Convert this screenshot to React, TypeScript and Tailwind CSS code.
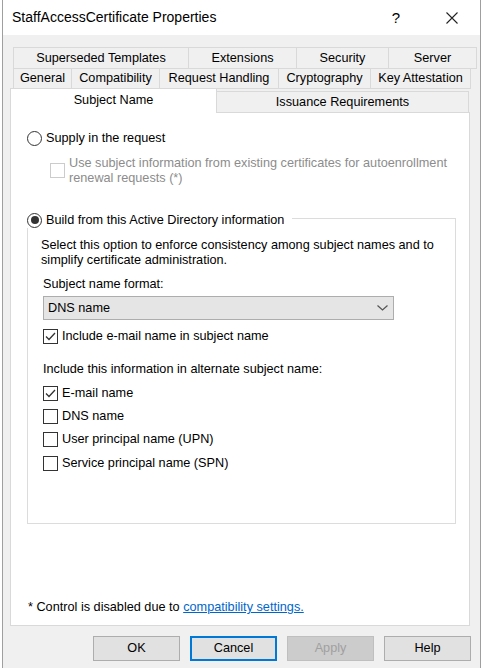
import React from 'react';

function Tab({ label, w }: { label: string; w: string }) {
  return (
    <div
      className={`-ml-px first:ml-0 flex items-center justify-center border border-[#d9d9d9] bg-[#f0f0f0] ${w}`}
    >
      {label}
    </div>
  );
}

function Radio({ checked }: { checked?: boolean }) {
  return (
    <div className="flex h-[15px] w-[15px] shrink-0 items-center justify-center rounded-full border border-[#333333] bg-white">
      {checked && <div className="h-[8px] w-[8px] rounded-full bg-[#333333]" />}
    </div>
  );
}

function Check({ checked, disabled }: { checked?: boolean; disabled?: boolean }) {
  return (
    <div
      className={`flex h-[15px] w-[15px] shrink-0 items-center justify-center border bg-white ${
        disabled ? 'border-[#cccccc]' : 'border-[#333333]'
      }`}
    >
      {checked && (
        <svg width="13" height="13" viewBox="0 0 13 13">
          <polyline points="2,6.5 5,9.5 11,3" fill="none" stroke="#333333" strokeWidth="1.3" />
        </svg>
      )}
    </div>
  );
}

function CheckRow({ label, checked }: { label: string; checked?: boolean }) {
  return (
    <div className="flex h-[23.3px] items-center gap-[4px]">
      <Check checked={checked} />
      <span>{label}</span>
    </div>
  );
}

function Button({ label, kind }: { label: string; kind?: 'default' | 'disabled' }) {
  const look =
    kind === 'default'
      ? 'border-2 border-[#0078d7] bg-[#e1e1e1] text-black'
      : kind === 'disabled'
        ? 'border border-[#bfbfbf] bg-[#cccccc] text-[#a0a0a0]'
        : 'border border-[#adadad] bg-[#e1e1e1] text-black';
  return (
    <div className={`flex h-[25px] w-[87px] items-center justify-center ${look}`}>{label}</div>
  );
}

export default function App() {
  return (
    <div className="h-[668px] w-[487px] overflow-hidden bg-white font-['Liberation_Sans',Arial,sans-serif] text-[12.7px] leading-[15px] text-black">
      <div className="ml-[2px] flex h-[668px] w-[479px] flex-col border-x border-[#9f9f9f]">
        {/* Title bar */}
        <div className="flex h-[35px] shrink-0 items-center bg-white pl-[9px]">
          <span className="text-[14px]">StaffAccessCertificate Properties</span>
          <span className="ml-auto text-[15px]">?</span>
          <svg className="ml-[46px] mr-[22px]" width="12" height="12" viewBox="0 0 12 12">
            <path d="M0.5 0.5 L11.5 11.5 M11.5 0.5 L0.5 11.5" stroke="#222222" strokeWidth="1.1" />
          </svg>
        </div>

        {/* Body */}
        <div className="flex flex-1 flex-col bg-[#f0f0f0] pl-[7px] pt-[12px]">
          {/* Tab rows */}
          <div className="ml-[3px] flex h-[22px]">
            <Tab label="Superseded Templates" w="w-[176px]" />
            <Tab label="Extensions" w="w-[109px]" />
            <Tab label="Security" w="w-[93px]" />
            <Tab label="Server" w="w-[89px]" />
          </div>
          <div className="-mt-px ml-[3px] flex h-[21px]">
            <Tab label="General" w="w-[59px]" />
            <Tab label="Compatibility" w="w-[89px]" />
            <Tab label="Request Handling" w="w-[120px]" />
            <Tab label="Cryptography" w="w-[93px]" />
            <Tab label="Key Attestation" w="w-[101px]" />
          </div>
          <div className="relative z-10 -mt-px flex h-[25px] items-end">
            <div className="flex h-[25px] w-[207px] items-center justify-center border border-b-0 border-[#d9d9d9] bg-white pb-[1px]">
              Subject Name
            </div>
            <div className="-ml-px flex h-[22px] w-[253px] items-center justify-center border border-[#d9d9d9] bg-[#f0f0f0]">
              Issuance Requirements
            </div>
          </div>

          {/* Panel */}
          <div className="-mt-px flex h-[514px] w-[460px] flex-col border border-[#d9d9d9] bg-white pl-[16px]">
            <div className="mt-[17px] flex h-[16px] items-center gap-[4px]">
              <Radio />
              <span>Supply in the request</span>
            </div>
            <div className="ml-[23px] mt-[9.5px] flex items-center gap-[4px] text-[#8c8c8c]">
              <Check disabled />
              <span>
                Use subject information from existing certificates for autoenrollment
                <br />
                renewal requests (*)
              </span>
            </div>

            {/* Group box */}
            <div className="relative mt-[32.5px] h-[306px] w-[429px] border border-[#dcdcdc]">
              <div className="absolute left-[-1px] top-[-7px] flex h-[16px] items-center gap-[4px] bg-white pr-[8px]">
                <Radio checked />
                <span>Build from this Active Directory information</span>
              </div>
              <div className="flex flex-col pl-[13px] pt-[18.5px]">
                <p>
                  Select this option to enforce consistency among subject names and to
                  <br />
                  simplify certificate administration.
                </p>
                <div className="ml-[2px] mt-[9px]">Subject name format:</div>
                <div className="ml-[2px] mt-[4.5px] flex h-[24px] w-[351px] items-center justify-between border border-[#adadad] bg-[#e5e5e5] pl-[4px] pr-[5px]">
                  <span>DNS name</span>
                  <svg width="11" height="6" viewBox="0 0 11 6">
                    <polyline points="0.5,0.5 5.5,5 10.5,0.5" fill="none" stroke="#555555" strokeWidth="1.2" />
                  </svg>
                </div>
                <div className="ml-[2px] mt-[8px] flex h-[16px] items-center gap-[4px]">
                  <Check checked />
                  <span>Include e-mail name in subject name</span>
                </div>
                <div className="ml-[2px] mt-[17.5px]">Include this information in alternate subject name:</div>
                <div className="ml-[2px] mt-[5px] flex flex-col">
                  <CheckRow label="E-mail name" checked />
                  <CheckRow label="DNS name" />
                  <CheckRow label="User principal name (UPN)" />
                  <CheckRow label="Service principal name (SPN)" />
                </div>
              </div>
            </div>

            <div className="mb-[10px] ml-[1px] mt-auto">
              * Control is disabled due to{' '}
              <span className="text-[#0066cc] underline">compatibility settings.</span>
            </div>
          </div>

          {/* Buttons */}
          <div className="mt-[10px] flex gap-[10px] pl-[83px]">
            <Button label="OK" />
            <Button label="Cancel" kind="default" />
            <Button label="Apply" kind="disabled" />
            <Button label="Help" />
          </div>
        </div>
      </div>
    </div>
  );
}
